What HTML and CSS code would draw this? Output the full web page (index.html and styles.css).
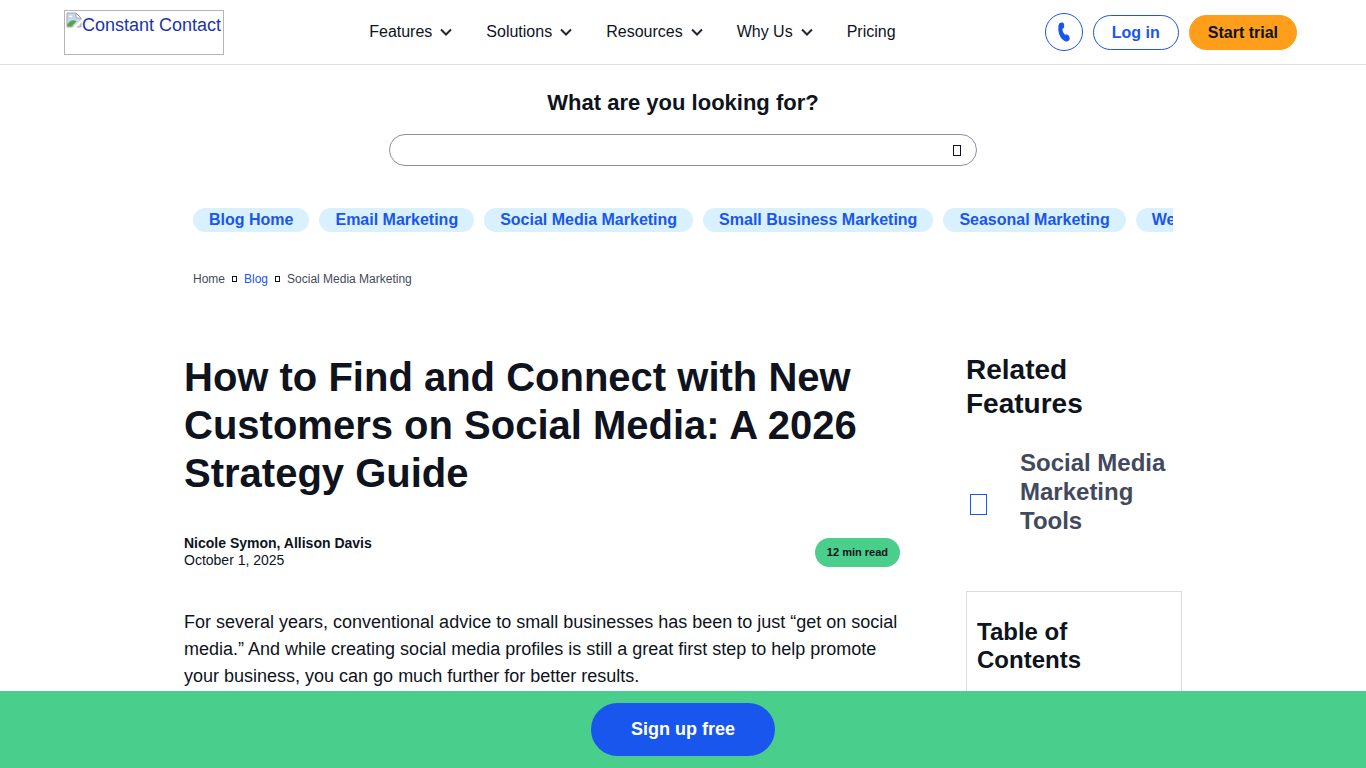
FILE: index.html
```html
<!DOCTYPE html>
<html lang="en">
<head>
    <meta charset="UTF-8">
    <meta name="viewport" content="width=device-width, initial-scale=1.0">
    <title>How to Find and Connect with New Customers on Social Media</title>
    <link rel="stylesheet" href="styles.css">
</head>
<body>
    <header class="header">
        <a class="logo" href="#">
            <svg width="16" height="16" viewBox="0 0 16 16" aria-hidden="true">
                <path d="M1 1h9l5 5v9H1z" fill="#c9d8f2" stroke="#a5a5a5"/>
                <path d="M10 1v5h5z" fill="#fff" stroke="#a5a5a5"/>
                <path d="M3 5c0-2 3-2 3 0z" fill="#fff"/>
                <path d="M1.500 14.500v-2c3-5 6-5 9-3l-5 5z" fill="#54a745"/>
                <path d="M6 16L16 7v3l-6 6z" fill="#fff"/>
            </svg><span>Constant Contact</span>
        </a>

        <nav class="nav">
            <a href="#">Features <svg class="chevron" viewBox="0 0 12 8"><path d="M1 1.500L6 6.500l5-5"/></svg></a>
            <a href="#">Solutions <svg class="chevron" viewBox="0 0 12 8"><path d="M1 1.500L6 6.500l5-5"/></svg></a>
            <a href="#">Resources <svg class="chevron" viewBox="0 0 12 8"><path d="M1 1.500L6 6.500l5-5"/></svg></a>
            <a href="#">Why Us <svg class="chevron" viewBox="0 0 12 8"><path d="M1 1.500L6 6.500l5-5"/></svg></a>
            <a href="#">Pricing</a>
        </nav>

        <div class="actions">
            <a class="phone" href="#" aria-label="Call us">
                <svg width="12" height="20" viewBox="0 0 12 20"><path d="M1.800 1C3 .3 5.200.300 5.700 1.200c.6 1.400.7 3.400.1 4.500-.4.700-1.500.9-1.400 1.600.2 2.100 1.100 4 2.500 5.300.7.500 1.500-.3 2.300 0 1.300.5 2.400 2.300 2.500 3.700.1 1.500-1.400 3.200-3 3.200C4.300 19.500.3 13.200.3 6.800.3 4.300.5 1.900 1.800 1z" fill="#1856ed"/></svg>
            </a>
            <a class="btn btn-login" href="#">Log in</a>
            <a class="btn btn-trial" href="#">Start trial</a>
        </div>
    </header>

    <form class="search">
        <label for="search">What are you looking for?</label>
        <div class="search-box">
            <input type="text" id="search">
            <button type="button" aria-label="Search"><span class="glyph"></span></button>
        </div>
    </form>

    <div class="subnav">
        <nav class="topics">
            <a href="#">Blog Home</a>
            <a href="#">Email Marketing</a>
            <a href="#">Social Media Marketing</a>
            <a href="#">Small Business Marketing</a>
            <a href="#">Seasonal Marketing</a>
            <a href="#">Website</a>
        </nav>
        <div class="breadcrumb">
            <span>Home</span>
            <span class="glyph glyph-small"></span>
            <a href="#">Blog</a>
            <span class="glyph glyph-small"></span>
            <span>Social Media Marketing</span>
        </div>
    </div>

    <div class="container">
        <main class="article">
            <h1>How to Find and Connect with New Customers on Social Media: A 2026 Strategy Guide</h1>
            <div class="meta">
                <div>
                    <div class="author">Nicole Symon, Allison Davis</div>
                    <div>October 1, 2025</div>
                </div>
                <span class="read-time">12 min read</span>
            </div>
            <p>For several years, conventional advice to small businesses has been to just “get on social media.” And while creating social media profiles is still a great first step to help promote your business, you can go much further for better results.</p>
        </main>

        <aside class="sidebar">
            <h2>Related Features</h2>
            <a class="feature" href="#">
                <span class="glyph glyph-large"></span>
                <span>Social Media Marketing Tools</span>
            </a>
            <div class="toc">
                <h3>Table of Contents</h3>
            </div>
        </aside>
    </div>

    <div class="signup-bar">
        <a href="#">Sign up free</a>
    </div>
</body>
</html>
```

FILE: styles.css
```css
* { box-sizing: border-box; }
body { margin: 0; padding-bottom: 77px; font-family: "Liberation Sans", Arial, sans-serif; font-size: 16px; color: #0e131d; background: #fff; }
a { color: #1856ed; text-decoration: none; }

.header { display: flex; justify-content: space-between; align-items: center; height: 65px; padding: 0 69px 0 64px; border-bottom: 1px solid #dedfe3; }
.logo { display: flex; width: 160px; height: 45px; padding: 1px; border: 1px solid #b5b5b5; font-size: 18px; line-height: 26px; color: #1b33b0; white-space: nowrap; }
.nav { display: flex; gap: 34px; line-height: 24px; }
.nav a { display: flex; align-items: center; gap: 8px; color: #0e131d; }
.chevron { width: 12px; height: 8px; fill: none; stroke: #22262f; stroke-width: 2; }
.actions { display: flex; align-items: center; gap: 10px; padding-left: 4px; }
.phone { display: flex; justify-content: center; align-items: center; width: 38px; height: 38px; border: 1px solid #1856ed; border-radius: 50%; }
.btn { height: 35px; border: 1px solid #1856ed; border-radius: 18px; padding: 0 18px; line-height: 33px; font-weight: bold; }
.btn-trial { background: #ff9e1a; border-color: #ff9e1a; color: #0e131d; }

.search { width: 588px; max-width: 100%; margin: 0 auto; padding-top: 24px; text-align: center; }
.search label { display: block; font-size: 22px; font-weight: bold; line-height: 28px; margin-bottom: 17px; }
.search-box { display: flex; align-items: center; height: 32px; border: 1px solid #8d8da8; border-radius: 16px; padding: 0 14px 0 16px; }
.search-box input { flex: 1; border: 0; outline: 0; background: none; font: inherit; }
.search-box button { display: flex; padding: 0 1px 0 0; border: 0; background: none; color: #0e131d; }

/* empty boxes standing in for the icon font */
.glyph { display: inline-block; width: 8px; height: 11px; border: 1px solid; }
.glyph-small { width: 5px; height: 6px; }
.glyph-large { width: 17px; height: 21px; color: #1856ed; }

.subnav { max-width: 980px; margin: 42px auto 0; }
.topics { display: flex; gap: 10px; overflow: hidden; }
.topics a { flex: none; padding: 0 16px; border-radius: 12px; background: #d9f1ff; font-weight: bold; line-height: 24px; }
.breadcrumb { display: flex; align-items: center; gap: 7px; margin-top: 38px; font-size: 12px; line-height: 18px; color: #444a5c; }
.breadcrumb .glyph { color: #0e131d; }

.container { display: grid; grid-template-columns: 1fr 216px; gap: 66px; max-width: 998px; margin: 65px auto 0; }
.article h1 { margin: 0; font-size: 40px; line-height: 48px; }
.meta { display: flex; justify-content: space-between; align-items: center; margin-top: 38px; font-size: 14px; line-height: 17px; }
.author { font-weight: bold; }
.read-time { padding: 0 12px; border-radius: 15px; background: #49ce8b; font-size: 11px; font-weight: bold; line-height: 29px; }
.article p { margin: 40px 0 0; font-size: 18px; line-height: 27px; }

.sidebar h2 { margin: 0; font-size: 28px; line-height: 34px; }
.feature { display: flex; align-items: center; gap: 33px; margin-top: 27px; padding-left: 4px; color: #42495e; font-size: 24px; font-weight: bold; line-height: 29px; }
.feature .glyph { flex: none; margin-top: 25px; }
.toc { margin-top: 56px; padding: 26px 10px; border: 1px solid #dcdcdf; }
.toc h3 { margin: 0; font-size: 24px; line-height: 28px; }

.signup-bar { position: fixed; left: 0; right: 0; bottom: 0; display: flex; justify-content: center; padding: 12px; background: #49ce8b; }
.signup-bar a { padding: 0 40px; border-radius: 27px; background: #1856ed; color: #fff; font-size: 18px; font-weight: bold; line-height: 53px; }
```
